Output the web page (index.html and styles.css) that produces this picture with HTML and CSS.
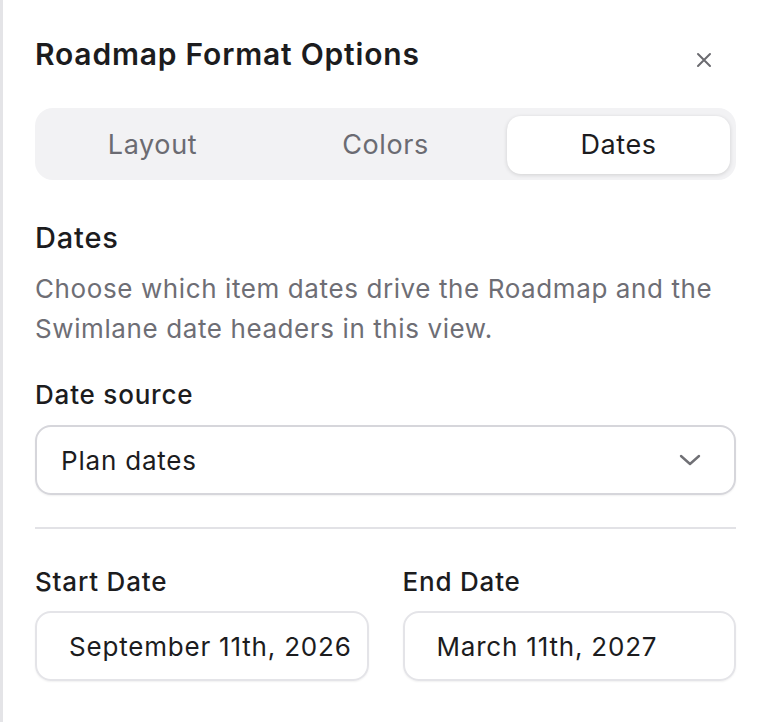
FILE: index.html
```html
<!DOCTYPE html>
<html lang="en">
  <head>
    <meta charset="UTF-8" />
    <meta name="viewport" content="width=device-width, initial-scale=1.0" />
    <title>Roadmap Format Options</title>
    <link rel="stylesheet" href="styles.css">
  </head>
  <body>
    <div class="panel">
      <div class="header">
        <h1>Roadmap Format Options</h1>
        <button class="close" aria-label="Close">
          <svg width="16" height="16" viewBox="0 0 16 16">
            <path d="M2 2 L14 14 M14 2 L2 14" stroke="#6b6b70" stroke-width="2" stroke-linecap="round" />
          </svg>
        </button>
      </div>

      <div class="tabs">
        <div class="tab">Layout</div>
        <div class="tab">Colors</div>
        <div class="tab active">Dates</div>
      </div>

      <h2>Dates</h2>
      <p class="desc">Choose which item dates drive the Roadmap and the Swimlane date headers in this view.</p>

      <label class="label">Date source</label>
      <div class="select">
        <span>Plan dates</span>
        <svg width="22" height="12" viewBox="0 0 22 12">
          <path d="M2 2 L11 10 L20 2" fill="none" stroke="#707075" stroke-width="2.4" stroke-linecap="round" stroke-linejoin="round" />
        </svg>
      </div>

      <hr class="divider" />

      <div class="row">
        <div class="col">
          <label class="label">Start Date</label>
          <div class="date">September 11th, 2026</div>
        </div>
        <div class="col">
          <label class="label">End Date</label>
          <div class="date">March 11th, 2027</div>
        </div>
      </div>
    </div>
  </body>
</html>
```

FILE: styles.css
```css
* {
  margin: 0;
  padding: 0;
  box-sizing: border-box;
}
body {
  font-family: "Inter", "Liberation Sans", sans-serif;
  background-color: #fff;
  color: #1c1c1e;
  letter-spacing: 0.8px;
}
.panel {
  min-height: 100vh;
  border-left: 3px solid #e4e4e7;
  padding: 37px 28px 0 32px;
}
.header {
  display: flex;
  justify-content: space-between;
  align-items: flex-start;
}
h1 {
  font-size: 30px;
  line-height: 34px;
  font-weight: 600;
  color: #1c1c1e;
}
.close {
  border: 0;
  background: none;
  width: 16px;
  height: 16px;
  margin: 15px 24px 0 0;
  display: flex;
}
.tabs {
  margin-top: 37px;
  display: grid;
  grid-template-columns: 1fr 1fr 1fr;
  gap: 10px;
  padding: 8px 6px 6px;
  background-color: #f2f2f4;
  border-radius: 18px;
}
.tab {
  height: 58px;
  line-height: 58px;
  text-align: center;
  font-size: 27px;
  letter-spacing: 0.6px;
  color: #6b6b72;
  border-radius: 14px;
}
.tab.active {
  background-color: #fff;
  color: #1c1c1e;
  box-shadow: 0 1px 4px rgba(0, 0, 0, 0.14);
}
h2 {
  margin-top: 41px;
  font-size: 29px;
  line-height: 34px;
  font-weight: 500;
  color: #1c1c1e;
}
.desc {
  margin-top: 14px;
  font-size: 26px;
  line-height: 40px;
  letter-spacing: 0.6px;
  color: #6e6e75;
}
.label {
  display: block;
  font-size: 26px;
  line-height: 32px;
  font-weight: 500;
  color: #1c1c1e;
}
.desc + .label {
  margin-top: 30px;
}
.select {
  margin-top: 14px;
  height: 70px;
  border: 2px solid #d6d6db;
  border-radius: 16px;
  display: flex;
  align-items: center;
  justify-content: space-between;
  padding: 0 33px 0 24px;
  font-size: 26px;
  box-shadow: 0 1px 2px rgba(0, 0, 0, 0.06);
}
.divider {
  margin-top: 32px;
  border: 0;
  height: 2px;
  background-color: #e2e2e6;
}
.row {
  margin-top: 37px;
  display: grid;
  grid-template-columns: 1fr 1fr;
  gap: 34px;
}
.date {
  margin-top: 13px;
  height: 70px;
  border: 2px solid #e4e4e8;
  border-radius: 16px;
  display: flex;
  align-items: center;
  padding-left: 32px;
  font-size: 26px;
  white-space: nowrap;
  overflow: hidden;
  box-shadow: 0 1px 2px rgba(0, 0, 0, 0.06);
}
```
